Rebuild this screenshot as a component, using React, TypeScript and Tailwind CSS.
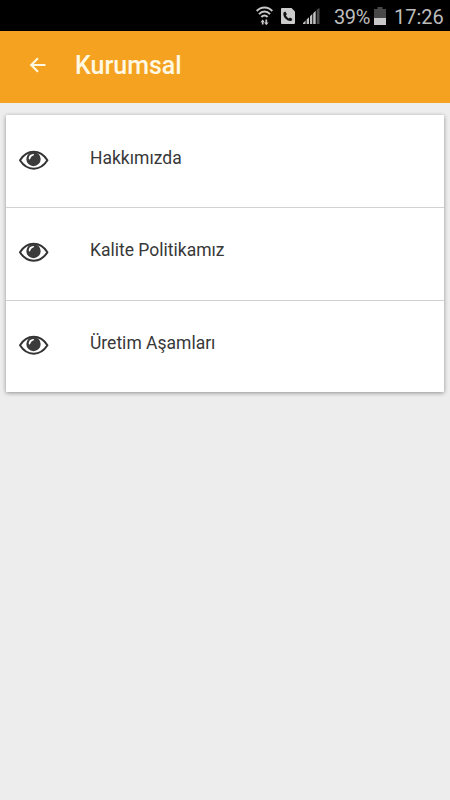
const menuItems = ["Hakkımızda", "Kalite Politikamız", "Üretim Aşamları"];

function WifiIcon() {
  return (
    <svg
      aria-hidden
      className="h-[20px] w-[17px] shrink-0"
      viewBox="0 0 17 20"
      fill="none"
      stroke="#c8c8c8"
      strokeWidth="2"
    >
      <path d="M.7 5C5 .2 12 .2 16.3 5" />
      <path d="M3 8.1C6.2 4.5 10.8 4.5 14 8.1" />
      <path d="M5.4 11C7.2 9 9.8 9 11.6 11" />
      <path d="M6.7 18.5v-4M10.3 13.5v4" strokeWidth="1.7" />
      <path
        d="M4.5 16.2 6.7 13.4 8.6 16.2zM8.2 16.4 10.3 19.2 12.6 16.4z"
        fill="#c8c8c8"
        stroke="none"
      />
    </svg>
  );
}

function CallIcon() {
  return (
    <svg aria-hidden className="ml-[8px] h-4 w-[14px] shrink-0" viewBox="0 0 14 16">
      <path
        d="M1 0h9.5L14 3.5V15a1 1 0 0 1-1 1H1a1 1 0 0 1-1-1V1a1 1 0 0 1 1-1z"
        fill="#cccccc"
      />
      <path
        d="M2.6 4.4 4.3 3.5l1.6 2.7-1 1.1c.6 1.4 1.5 2.4 2.9 3.1l1.1-1 2.5 1.6-.9 1.7C6.7 13.9 1.1 8.9 2.6 4.4z"
        fill="#111111"
      />
    </svg>
  );
}

function SignalIcon() {
  return (
    <svg aria-hidden className="ml-[8px] h-4 w-[17px] shrink-0" viewBox="0 0 17 16">
      <path
        d="M0 16v-1l2.6-2.5V16zM3.6 16v-4.5L6 9.2V16zM7 16V8.3L9.3 6V16zM10.2 16V5.2l2.5-2.4V16z"
        fill="#c0c0c0"
      />
      <path d="M13.7 16V1.8L16.5 0v16z" fill="#4c4c4c" />
    </svg>
  );
}

function BatteryIcon() {
  return (
    <svg aria-hidden className="h-[18px] w-[12px] shrink-0" viewBox="0 0 12 18">
      <path d="M3.5 0h5v2H12v9H0V2h3.5z" fill="#484848" />
      <path d="M0 11h12v7H0z" fill="#c8c8c8" />
    </svg>
  );
}

function StatusBar() {
  return (
    <div className="flex h-[31px] items-center bg-black pl-[256px] text-[20px] leading-none text-[#bdbdbd]">
      <WifiIcon />
      <CallIcon />
      <SignalIcon />
      <span className="ml-[14px] mt-[3px] w-[40px] whitespace-nowrap tracking-[-0.4px]">
        39%
      </span>
      <BatteryIcon />
      <span className="ml-[8px] mt-[3px] whitespace-nowrap">17:26</span>
    </div>
  );
}

function EyeIcon() {
  return (
    <svg aria-hidden className="h-5 w-[30px]" viewBox="0 0 30 20" fill="none">
      <path
        d="M1 10.3C4.8 4.3 9.5 1.8 14.7 1.8S24.6 4.3 28.4 10.3C24.6 16.3 19.9 18.7 14.7 18.7S4.8 16.3 1 10.3z"
        stroke="#333333"
        strokeWidth="2"
        strokeLinejoin="round"
      />
      <circle cx="14.5" cy="9" r="7.2" fill="#3b3b3b" />
      <path
        d="M9.7 8.5c0-2.7 1.7-4.5 4.6-4.6 1 0 1 1.1.1 1.5-1.8.7-2.6 1.7-3.1 3.4-.3 1-1.6.8-1.6-.3z"
        fill="#ffffff"
      />
    </svg>
  );
}

function Header() {
  return (
    <header className="flex h-[72px] items-center bg-[#f4a220] text-[#fff8e2]">
      <svg
        aria-hidden
        className="-mt-1 ml-[29px] h-4 w-[17px]"
        viewBox="0 0 17 16"
        fill="none"
        stroke="currentColor"
        strokeWidth="2.1"
      >
        <path d="M16.5 8H2.4M9 1.2 2.2 8 9 14.8" />
      </svg>
      <h1 className="-mt-[3px] ml-[29px] text-[25px] font-medium leading-none">
        Kurumsal
      </h1>
    </header>
  );
}

export default function App() {
  return (
    <main className="h-[800px] w-[450px] overflow-hidden bg-[#ededed] font-['Roboto',sans-serif]">
      <StatusBar />
      <Header />
      <ul className="mx-[6px] mt-[12px] rounded-[1px] bg-white shadow-[0_1px_4px_rgba(0,0,0,0.4)]">
        {menuItems.map((item) => (
          <li
            key={item}
            className="flex h-[92.4px] items-start border-t border-[#d2d2d2] pl-[13px] first:border-transparent"
          >
            <div className="mt-[34px]">
              <EyeIcon />
            </div>
            <span className="ml-[41px] mt-[31px] text-[17.5px] leading-[22px] text-[#383838]">
              {item}
            </span>
          </li>
        ))}
      </ul>
    </main>
  );
}
